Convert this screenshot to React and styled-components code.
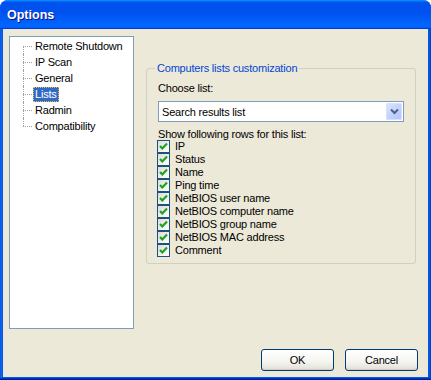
import styled, { createGlobalStyle } from 'styled-components';

const GlobalStyle = createGlobalStyle`
  html, body {
    margin: 0;
    padding: 0;
    background: #ffffff;
  }
  body {
    font-family: "Liberation Sans", Arial, sans-serif;
    font-size: 11px;
    letter-spacing: -0.2px;
    color: #000;
  }
  * {
    box-sizing: border-box;
  }
`;

const Window = styled.div`
  width: 431px;
  height: 380px;
  display: flex;
  flex-direction: column;
  padding: 0 3px 3px;
  border-radius: 8px 8px 0 0;
  background: linear-gradient(to right, #0043cf 0, #1a6ff2 1px, #0058ea 2px, #0058ea calc(100% - 2px), #003fc4 100%);
  box-shadow: inset 0 -1px 0 #001c96, inset 0 -2px 0 #0035c0;
`;

const TitleBar = styled.div`
  height: 29px;
  margin: 0 -3px;
  padding-left: 7px;
  display: flex;
  align-items: center;
  border-radius: 8px 8px 0 0;
  background: linear-gradient(180deg, #0997ff, #0053ee 8%, #0050ee 40%, #0066ff 88%, #0066ff 93%, #005bff 95%, #003dd7 96%, #003dd7);
  color: #fff;
  font-weight: bold;
  font-size: 12.5px;
  letter-spacing: 0;
  text-shadow: 1px 1px 0 #0f1089;
`;

const Client = styled.div`
  flex: 1;
  display: flex;
  flex-direction: column;
  background: #ece9d8;
  padding: 7px 10px 6px 6px;
`;

const Body = styled.div`
  display: flex;
  gap: 12px;
  height: 293px;
`;

const Tree = styled.ul`
  width: 125px;
  height: 100%;
  margin: 0;
  padding: 1px 0 0;
  list-style: none;
  background: #fff;
  border: 1px solid #7f9db9;
`;

const TreeItem = styled.li`
  position: relative;
  height: 16px;
  padding-left: 23px;
  display: flex;
  align-items: center;

  &::before {
    content: '';
    position: absolute;
    left: 13px;
    top: 8px;
    width: 9px;
    border-top: 1px dotted #a0a0a0;
  }

  &::after {
    content: '';
    position: absolute;
    left: 13px;
    top: ${p => (p.$first ? '8px' : '0')};
    height: ${p => (p.$last || p.$first ? '8px' : '16px')};
    border-left: 1px dotted #a0a0a0;
  }
`;

const TreeLabel = styled.span`
  height: 15px;
  line-height: 15px;
  padding: 0 2px;
  white-space: nowrap;
  ${p => p.$selected && `
    background: #316ac5;
    color: #fff;
    outline: 1px dotted #e0c040;
    outline-offset: -1px;
  `}
`;

const Panel = styled.div`
  flex: 1;
  display: flex;
  flex-direction: column;
  padding-top: 26px;
`;

const Group = styled.fieldset`
  width: 270px;
  margin: 0;
  padding: 0 11px 6px 11px;
  border: 1px solid #d0d0bf;
  border-radius: 3px;
`;

const Legend = styled.legend`
  margin-left: -3px;
  padding: 0 2px;
  line-height: 13px;
  color: #0046d5;
`;

const Label = styled.div`
  line-height: 13px;
  margin-top: ${p => p.$top || 0}px;
`;

const Combo = styled.div`
  margin-top: 6px;
  height: 21px;
  display: flex;
  align-items: center;
  background: #fff;
  border: 1px solid #7f9db9;
  padding-left: 3px;
`;

const ComboText = styled.span`
  flex: 1;
`;

const ComboButton = styled.div`
  width: 16px;
  height: 17px;
  margin-right: 1px;
  display: flex;
  align-items: center;
  justify-content: center;
  border-radius: 2px;
  background: linear-gradient(135deg, #dce6fd 0%, #c3d3fd 50%, #b2c6f7 100%);
  box-shadow: inset 0 0 0 1px #d6e1fc;
`;

const Rows = styled.div`
  margin-top: -1px;
  display: flex;
  flex-direction: column;
`;

const Row = styled.label`
  height: 13px;
  display: flex;
  align-items: center;
  gap: 5px;
  margin-left: -1px;
  line-height: 13px;
`;

const Box = styled.span`
  width: 13px;
  height: 13px;
  display: flex;
  align-items: center;
  justify-content: center;
  border: 1px solid #1c5180;
  background: linear-gradient(135deg, #dcdcd7 0%, #f5f5f2 70%, #ffffff 100%);
`;

const Footer = styled.div`
  margin-top: 20px;
  display: flex;
  justify-content: flex-end;
  gap: 11px;
`;

const Button = styled.button`
  width: 73px;
  height: 22px;
  padding: 0;
  font: inherit;
  letter-spacing: inherit;
  color: #000;
  border: 1px solid #003c74;
  border-radius: 3px;
  background: linear-gradient(180deg, #ffffff 0%, #f4f4f0 60%, #e6e4dc 90%, #d6d0c5 100%);
  box-shadow: inset 0 -1px 0 #d6d0c5;
`;

const Check = () => (
  <svg width="11" height="11" viewBox="0 0 11 11">
    <polyline points="2,5 4.3,7.5 9,2.5" fill="none" stroke="#21a121" strokeWidth="2.2" />
  </svg>
);

const Chevron = () => (
  <svg width="9" height="7" viewBox="0 0 9 7">
    <polyline points="1,1.5 4.5,5 8,1.5" fill="none" stroke="#4d6185" strokeWidth="2" />
  </svg>
);

const pages = ['Remote Shutdown', 'IP Scan', 'General', 'Lists', 'Radmin', 'Compatibility'];
const columns = [
  'IP',
  'Status',
  'Name',
  'Ping time',
  'NetBIOS user name',
  'NetBIOS computer name',
  'NetBIOS group name',
  'NetBIOS MAC address',
  'Comment',
];

const App = () => (
  <>
    <GlobalStyle />
    <Window>
      <TitleBar>Options</TitleBar>
      <Client>
        <Body>
          <Tree>
            {pages.map((p, i) => (
              <TreeItem key={p} $first={i === 0} $last={i === pages.length - 1}>
                <TreeLabel $selected={p === 'Lists'}>{p}</TreeLabel>
              </TreeItem>
            ))}
          </Tree>
          <Panel>
            <Group>
              <Legend>Computers lists customization</Legend>
              <Label $top={7}>Choose list:</Label>
              <Combo>
                <ComboText>Search results list</ComboText>
                <ComboButton>
                  <Chevron />
                </ComboButton>
              </Combo>
              <Label $top={6}>Show following rows for this list:</Label>
              <Rows>
                {columns.map(c => (
                  <Row key={c}>
                    <Box>
                      <Check />
                    </Box>
                    {c}
                  </Row>
                ))}
              </Rows>
            </Group>
          </Panel>
        </Body>
        <Footer>
          <Button>OK</Button>
          <Button>Cancel</Button>
        </Footer>
      </Client>
    </Window>
  </>
);

export default App;
